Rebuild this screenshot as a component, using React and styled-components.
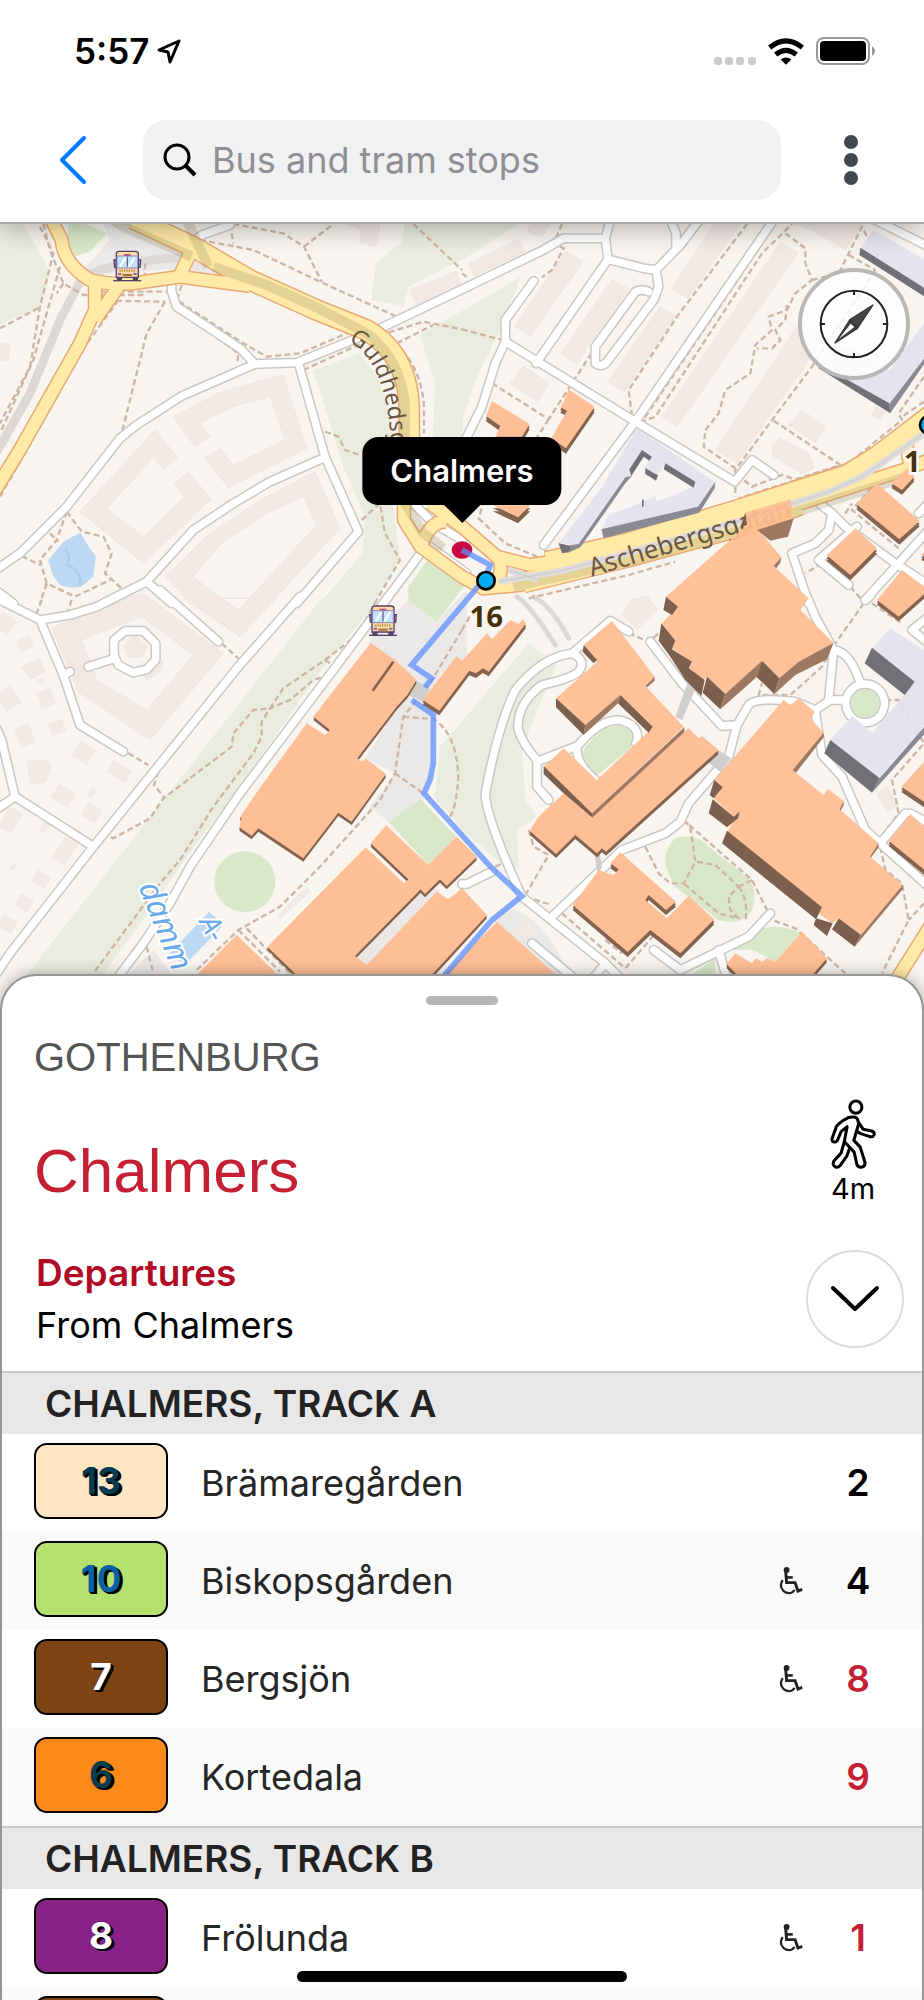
import React, { useState } from 'react';
import styled, { createGlobalStyle } from 'styled-components';

const GlobalStyle = createGlobalStyle`
  * {
    box-sizing: border-box;
  }
  body {
    margin: 0;
    background: #fff;
    color: #000;
    font-family: Inter, 'Liberation Sans', sans-serif;
  }
  button {
    padding: 0;
    border: none;
    background: none;
    cursor: pointer;
  }
`;

const tracks = [
  {
    name: 'CHALMERS, TRACK A',
    departures: [
      { line: '13', bg: '#fee6c3', color: '#043b54', to: 'Brämaregården', min: 2 },
      { line: '10', bg: '#b5e26f', color: '#0a62a4', to: 'Biskopsgården', min: 4, wheelchair: true },
      { line: '7', bg: '#7d4313', color: '#fff', to: 'Bergsjön', min: 8, wheelchair: true, live: true },
      { line: '6', bg: '#fb8a1b', color: '#0b3c4e', to: 'Kortedala', min: 9, live: true },
    ],
  },
  {
    name: 'CHALMERS, TRACK B',
    departures: [
      { line: '8', bg: '#872185', color: '#fff', to: 'Frölunda', min: 1, wheelchair: true, live: true },
      { line: '', bg: '#7d4313', color: '#fff', to: '', min: '' },
    ],
  },
];

// The map is cut in four tiles, every path is in the units of its own tile
const tiles = [
  {
    x: 0,
    y: 0,
    grass: [
      'M0 0H60L110 80L150 160L120 262L0 312Z',
      'M1215 0H1575L1390 118L1225 200L1210 258L1114 240L1128 128L1205 66Z',
      'M1386 272L1561 172L1500 330L1430 470L1390 590L1386 660H1298L1305 490L1260 345Z',
      'M940 450L1080 400L1130 470L1160 540L1180 650V860L1200 1020L1120 1150H960L1088 1000L1095 890L1030 740Z',
    ],
    lawn: [
      'M205 12H260L320 40L270 95L220 110L200 70Z',
      'M1290 1010L1400 1090L1310 1205L1225 1140V1100Z',
    ],
    plaza: ['M310 12H400L640 130L750 182L650 160L500 148L300 165L250 150L330 60Z'],
    water: ['M240 938L270 985L287 1010L280 1070L250 1095Q220 1112 180 1095L158 1065L145 1020L190 965Z'],
    flat: [
      'M520 590L670 512L850 465L920 685L685 803L615 715L660 685L700 735L855 660L810 530L700 560L600 608L630 648L585 680Z',
      'M465 630L533 712L490 750L462 712L320 865L430 950L555 830L522 790L565 755L633 838L430 1030L240 875Z',
      'M497 1070L630 940L780 840L945 755L1020 925L720 1250L570 1150ZM578 1070L715 1170L950 915L910 830L800 880L670 965Z',
      'M0 370H30L25 422H0Z',
      'M1228 210L1370 153L1386 200L1250 252Z',
      'M1045 12H1140L1130 78L1080 70V30Z',
    ],
    tram: ['M-20 715L90 520L180 300L240 185Q300 125 560 112'],
    paths: [
      'M130 12L150 90L190 190L250 225H440',
      'M120 20L160 100L120 260L90 440L0 610',
      'M180 140L100 420L0 640',
      'M190 190L170 220',
      'M0 325L120 262',
      'M300 215H500M320 242L495 245M435 130V215',
      'M495 245L440 340L365 640',
      'M355 240L240 400L80 690L0 830',
      'M545 195L530 240L730 370L800 410L900 400L1110 310',
      'M540 270L715 400L712 430',
      'M600 60L760 90L960 185L1190 290M690 12L700 70',
      'M700 12L850 40L912 80L965 185M912 80L1000 12M1240 12L1386 150',
      'M1120 320Q1262 400 1272 560V640',
      'M910 450L1140 345L1270 305L1386 328M1190 370L1300 315',
      'M975 635L1015 650L1035 690L1080 705',
      'M1085 900L1140 850L1155 940L1200 1020L1130 1140',
      'M200 875L245 935L310 950L335 1000L315 1060L370 1110',
      'M200 875L170 960L120 1020L140 1090L225 1130L330 1080',
      'M65 1008L120 1035M150 940L175 965M140 1090L120 1150',
    ],
    roads: [
      'M515 190V215L530 260L720 385L765 432L545 528L410 615L360 655L200 860L60 1000L-20 1055',
      'M765 432L890 428L1120 335L1386 208L1630 90L1690 55H1816',
      'M895 428L975 710L1075 935L890 1150',
      'M975 712L810 785L700 850L580 930L440 1085L310 1150',
      'M440 1085L515 1150',
      'M-20 1105L40 1150',
      'M580 65L605 45L690 15V0',
      'M1262 1000L1150 1150',
      'M1240 850L1300 910L1386 960M1290 980L1400 1060',
    ],
    yellow: [
      'M155 0L185 60Q190 130 270 180Q330 195 400 190L540 170L750 198',
      'M1228 700L1212 800V900L1262 980L1386 1070L1450 1105L1560 1095L1640 1072',
      'M285 180V270L240 370L65 680L-20 820',
      'M355 200L285 300',
      'M540 165L575 90',
      'M1290 850L1386 920L1490 1010L1590 1035L1690 1020',
      'M1262 980Q1290 900 1340 905',
      'M1500 1020Q1510 1070 1480 1090',
    ],
    avenue: [
      'M400 -4L575 78L750 180L950 270L1100 330C1200 390 1228 480 1228 580V720',
      'M1570 1088L1886 1010L2236 915L2400 855',
      'M1640 1025L1886 968L2186 878L2540 765L2630 710L2800 580',
    ],
    shade: [
      'M640 140L800 195L950 262L1100 340Q1205 420 1215 560V660L1215 850L1270 940L1330 985',
      'M1540 1100L1886 1024L2236 928L2400 872L2720 770',
      'M560 0L625 140',
      'M340 0L370 20L575 110',
    ],
  },
  {
    x: 1386,
    y: 0,
    flat: [
      'M20 130L170 58L190 95L35 168Z',
      'M312 93L363 125L205 350L158 318Z',
      'M450 178L500 206L345 432L297 402Z',
      'M595 260L641 288L487 515L437 485Z',
      'M755 12H835L677 235L630 205Z',
      'M955 68L1008 98L645 620L600 590Z',
      'M1010 310L1090 350L825 728L760 690Z',
      'M185 438L262 490L225 545L145 490Z',
      'M1020 570L1090 620L1060 668L980 615Z',
      'M955 655L1040 700L1057 745L1020 762L935 710L930 675Z',
      'M1000 12H1200L1150 90L1060 35Z',
      'M205 12H260L240 52L198 35Z',
      'M1240 560L1270 575L1255 600L1230 585Z',
    ],
    paths: [
      'M300 12L275 70L305 85L270 150L240 172M0 160L20 175',
      'M0 328L120 360',
      'M855 12L645 290L500 510L512 605',
      'M935 20L540 605L580 590L900 100L990 12',
      'M90 490L260 598L385 405M260 598L200 690L60 860L50 900',
      'M50 895L130 970L250 1020V980',
      'M970 40L1030 85V130L1050 180L1000 220L975 270L920 290L930 330L880 375L865 460L790 510L770 580L730 630L725 680L820 745',
      'M975 255L970 300L940 330L955 360L930 385H885',
      'M1050 180L1130 160L1200 20L1220 60M1160 105L1240 150',
      'M1240 150L1050 440L930 600L820 750V830',
      'M935 602L1135 735L1000 778L960 765L870 800L845 780',
      'M1386 470L1310 580L1320 600L1160 730L830 835M1386 545L1320 590',
      'M1310 985L1170 870L1240 790M1150 880L1170 850',
      'M1080 1030L1030 1060M1165 1100L1200 1140',
      'M200 1135L500 1065L640 1025',
    ],
    roads: [
      'M445 0L430 55L438 118L222 430',
      'M438 118L545 145L582 150L655 75L712 0',
      'M642 80V40L625 0',
      'M582 150L590 200L575 240L435 425Q420 445 400 430V380L520 215Q540 205 560 215',
      'M935 0L520 605L245 975',
      'M130 365L520 605L818 785L870 720L935 765',
      'M215 183L130 300V365L100 430L60 560L10 660',
      'M1240 0L1400 80',
      'M1065 845L1110 880L1150 920L1300 1030L1400 1095',
      'M1110 880L1100 930L1060 970L990 1000L1040 1150',
      'M1185 920L1070 1020L1160 1095',
      'M1400 930L1210 1140',
      'M1400 850L1370 880',
    ],
    yellow: ['M1000 855L1340 745L1400 720', 'M1330 660L1345 740'],
    rail: ['M110 1085L300 1052L500 998L850 898L1100 815L1200 770L1330 680L1400 630', 'M140 1050L230 1080'],
  },
  {
    x: 0,
    y: 1140,
    grass: [
      'M965 -5H1135L1110 30L960 215L720 560L560 770L430 960L290 1150H60L690 345Z',
      'M1400 375L1320 440L1312 560L1300 590L1400 700Z',
    ],
    lawn: [
      'M1165 665L1262 598L1370 712L1285 795Z',
      'M735 754A92 91 0 1 1 734 754Z',
    ],
    plaza: [
      'M1105 130L1240 -20L1310 65L1400 -30V190L1300 290V500L1270 600L1170 670L1110 620L1185 520L1097 475L1190 320L1250 240Z',
      'M1065 1070L1260 870L1320 870L1100 1100Z',
      'M380 1130L460 1050L520 1130Z',
    ],
    water: ['M627 935L670 975L560 1090L500 1070Z'],
    flat: [
      'M155 85L340 5L430 -20L670 160L450 420L235 275ZM245 120L290 240L440 330L580 165L425 50Z',
      'M575 -5H830L720 110ZM650 -5L720 35L755 -5Z',
      'M370 140L405 105L440 140L425 172H385Z',
      'M430 230L450 195L490 180L480 215L440 240Z',
      'M833 945L920 862L930 875L840 955Z',
      'M80 485L125 478L150 490V515L135 545L95 553Z',
      'M64 200L120 176L133 215L95 238Z',
    ],
    houses: [
      [75, 132, 46, 38, -25],
      [15, 70, 52, 50, 35],
      [25, 295, 56, 62, -32],
      [138, 295, 46, 52, -18],
      [75, 406, 46, 62, -20],
      [171, 382, 46, 40, -22],
      [252, 458, 54, 54, 32],
      [358, 515, 66, 42, 30],
      [190, 587, 60, 50, 32],
      [275, 638, 48, 48, 30],
      [275, 577, 18, 30, 32],
      [195, 753, 46, 78, 33],
      [32, 660, 46, 70, 30],
      [134, 682, 20, 34, 30],
      [124, 838, 46, 42, 30],
      [72, 908, 46, 42, 30],
      [22, 972, 50, 42, 30],
      [40, 800, 14, 22, 30],
      [122, 243, 24, 14, -20],
    ],
    paths: [
      'M125 0L110 40M215 0L205 30',
      'M665 130L715 175M385 460L445 495',
      'M1130 0L1080 90L1040 130L975 180L850 265L810 325L760 330L700 400L695 440L490 595L450 655L340 715L320 705',
      'M990 225L940 240L870 300L810 325L785 365V410L760 460L640 620L540 780L480 850L280 1120',
      'M975 180L990 190M475 515L462 555L495 595',
      'M1386 90L1290 250L1210 350L1185 520L1140 600L960 800L840 920L715 990L590 1110',
      'M1185 520L1270 580M1210 350L1300 357Q1370 400 1375 530Q1370 620 1350 650',
      'M715 990L840 1115M740 985L870 1120M440 1040L460 1120',
    ],
    roads: [
      'M900 -10L715 200L280 740L30 1060L-30 1150',
      'M1165 -10L1000 210L720 580L570 800L510 910L430 1030L340 1150',
      'M-20 -10L120 60L190 225L240 375L370 455',
      'M120 60L210 45L290 20L370 -20',
      'M480 -30L655 125',
      'M-20 365L5 420L45 590L280 740',
      'M45 590L-20 635',
      'M210 215L190 225',
      'M265 200L345 175',
      'M375 93L430 93L467 130V180L440 208L400 218L355 195L342 165V120Z',
      'M1386 852H1400L1476 815',
    ],
  },
  {
    x: 1386,
    y: 1140,
    grass: ['M-66 440L200 130L285 195L180 440L190 600L225 650L165 690L170 800H130L0 690L-80 580Z'],
    lawn: [
      'M360 460Q370 430 430 385Q470 370 505 385Q525 420 500 450L405 525Q370 500 360 460Z',
      'M1210 268A42 42 0 1 1 1209 268Z',
      'M640 715Q700 695 740 740L860 835Q890 880 870 930Q840 980 770 960L640 860Q580 770 640 715Z',
      'M795 1050L900 985Q960 970 1015 1000L940 1085L870 1050Z',
      'M680 1130L760 1075V1130Z',
    ],
    plaza: ['M90 960L130 920Q180 935 200 950Q280 1010 320 1130H200Z'],
    flat: [
      'M510 0L555 -12L588 30L525 88L480 42Z',
      'M1275 560L1310 615L1275 637L1245 582Z',
      'M195 965L218 985L190 1020L165 1000Z',
    ],
    siding: ['M165 -10Q200 10 280 135', 'M215 -10Q270 20 320 115'],
    paths: [
      'M500 100L560 125L590 100M0 90L40 20',
      'M550 740L590 820L625 850H665L700 785L685 680L670 665L870 840L930 960L1000 985L1150 1120',
      'M705 785L760 795L830 860L800 890L805 930L830 955L770 940L665 850',
      'M830 860Q860 900 850 965M870 840L830 860',
      'M190 885L260 765L215 740L200 690M190 890L260 912',
      'M300 940L490 1105L580 1000M430 1020L480 1060',
      'M1205 10L1120 130L1080 200L985 285H890L900 250M1230 10L1320 70',
      'M1270 300H1310L1386 430L1290 540L1310 640L1250 720L1270 810L1320 850L1340 960L1260 1120M1386 910L1340 960',
      'M100 800L130 785',
    ],
    roads: [
      'M500 95L445 62L330 160Q240 170 160 270Q110 370 70 580Q70 650 180 890L430 1090L490 1150',
      'M330 160Q375 180 350 215Q330 235 240 255Q165 310 168 385Q180 430 225 480V560L260 600',
      'M225 485L340 440',
      'M400 540Q340 490 345 440Q420 350 480 362Q540 380 522 430',
      'M565 125L660 250L780 378L825 375L860 315Q880 290 1000 305L1060 330L1105 300H1150',
      'M825 375L800 470L680 610L655 665L610 700L480 750L275 945',
      'M1035 -10L1060 50L1115 150L1100 300',
      'M1115 150Q1165 155 1195 250',
      'M1210 252A58 58 0 1 1 1209 252Z',
      'M1060 335L1080 465L1140 530L1210 690L1400 860',
      'M1255 730L1330 640M1345 640L1400 670',
      'M430 1090L390 1140',
      'M575 1050L655 1110L860 1010L925 940',
      'M770 1050L790 1120',
      'M210 1030L330 1130',
      'M1400 50L1350 90L1400 130',
      'M1210 0L1225 -12',
    ],
    yellow: ['M1410 970L1300 1145'],
  },
];

// Low buildings: roof outline and wall depth
const lowBuildings = [
  { x: 1386, y: 0, depth: 16, d: 'M90 543L203 612L180 650H100L115 618L72 588Z' },
  { x: 1386, y: 0, depth: 16, d: 'M320 508L398 560L312 685L268 655L315 572L295 562L305 545Z' },
  { x: 1386, y: 0, depth: 18, d: 'M92 856H205L168 892Z' },
  { x: 1386, y: 0, depth: 16, d: 'M1245 790L1373 903L1312 958L1183 852Z' },
  { x: 1386, y: 0, depth: 14, d: 'M1335 745L1357 770L1320 810L1288 790Z' },
  { x: 1386, y: 0, depth: 16, d: 'M1180 925L1245 985L1165 1065L1094 1006Z' },
  { x: 1386, y: 0, depth: 14, d: 'M1320 1050L1400 1110L1310 1190L1245 1140Z' },
  { x: 1386, y: 0, depth: 14, d: 'M1400 985L1378 1005L1400 1020Z' },
  {
    x: 0,
    y: 1140,
    depth: 10,
    d: 'M1112 128L1188 182L1250 240L1222 285L1190 320L1072 475L1085 485L1097 475L1158 522L1055 665L1015 638L910 775L775 685L755 708L718 682L725 655L720 650L782 560L920 370L975 405L990 390L940 350Z',
  },
  {
    x: 0,
    y: 1140,
    depth: 10,
    d: 'M1097 742L1212 850L1225 838L1112 730L1158 676L1285 795L1370 710L1431 770L1340 858L1320 838L1275 882L1262 868L1065 1068L1100 1095L1310 875L1345 898L1386 865L1461 945L1300 1120L1250 1150H915L802 1040Z',
  },
  { x: 0, y: 1140, depth: 8, d: 'M710 1005L860 1150H565Z' },
  {
    x: 1386,
    y: 1140,
    depth: 14,
    d: 'M-16 168L0 183L75 100L90 118L145 60L170 72L182 58L192 70L80 215L62 205L42 220L22 212L-68 332L-118 300Z',
  },
  {
    x: 1386,
    y: 1140,
    depth: 12,
    d: 'M680 385L710 415L720 408L770 450L432 755L420 745L405 760L340 705L282 762L203 692L230 650L310 575L390 650L665 395Z',
  },
  {
    x: 1386,
    y: 1140,
    depth: 15,
    d: 'M475 757L642 905L612 930L560 885L550 900L615 955L680 888L757 958L655 1060L565 990L497 1056L332 915L410 810L455 825L470 808L445 790Z',
  },
  { x: 1386, y: 1140, depth: 12, d: 'M105 965L310 1150H-80L20 1050Z' },
  { x: 1386, y: 1140, depth: 16, d: 'M1400 470L1318 560L1400 615Z' },
  { x: 1386, y: 1140, depth: 16, d: 'M1345 642L1400 690V820L1280 722Z' },
  {
    x: 1386,
    y: 1140,
    depth: 12,
    d: 'M1020 995L1095 1075L1030 1150H850L793 1092L820 1060L870 1090L882 1074L900 1085L915 1074L940 1085Z',
  },
];

// Tall buildings have their wall faces drawn one by one
const tallBuildings = [
  {
    x: 1386,
    y: 1140,
    roof: [
      'M985 -302L850 -262L855 -225L612 -10L645 20L600 70L640 125L632 145L690 190L680 205L725 240L735 230L790 282L900 182L952 235L1010 185L1115 128L1015 30L1040 -5L935 -102L958 -128L890 -210L995 -240Z',
      'M450 62L578 230L550 258L665 380L390 640L245 500L305 445L405 540L570 385L475 285L370 375L282 295L405 185L365 135Z',
      'M965 300L985 315L1010 295L1058 335L1048 358L1085 398L998 515L1085 585L1098 567L1145 603L1133 628L1250 730L1225 770L1322 855L1197 1005L1130 955L1110 970L1070 940L1080 922L795 695L830 640L815 650L755 595L780 560L757 540Z',
    ],
    dark: [
      'M612 -10L648 20L630 45L604 30Z',
      'M598 70L640 122L630 148L690 185L680 205L728 240L718 288L670 240L625 170L590 122Z',
      'M735 230L790 282L775 328L722 278Z',
      'M900 182L952 235L937 282L883 230Z',
      'M850 -262L855 -225L835 -218Z',
      'M282 295L370 375L365 405L282 322Z',
      'M475 285L572 380L560 398L468 310Z',
      'M245 498L390 640V652L300 575L245 522Z',
      'M365 135L405 180L395 190L362 155Z',
      'M757 540L782 562L755 595L743 585Z',
      'M752 598L815 650L833 635L828 655L795 682L740 640Z',
      'M795 692L1080 922L1062 958L780 730Z',
      'M1062 955L1112 970L1095 1008L1055 975Z',
      'M1130 955L1197 1005L1178 1040L1110 988Z',
    ],
    mid: [
      'M885 -210L995 -245L978 -190L925 -178Z',
      'M935 -102L958 -128L955 -112L943 -95Z',
      'M790 282L900 182L885 230L775 328Z',
      'M952 235L1010 185L1115 128L1095 178L1000 225L937 282Z',
      'M370 375L475 285L468 310L365 405Z',
      'M390 640L667 382V396L390 654Z',
      'M550 258L578 230V242L556 262Z',
      'M1197 1005L1322 855V868L1178 1040Z',
      'M1085 398V412L1002 518L992 510Z',
      'M1133 628L1145 603V615L1136 632Z',
      'M1225 768L1250 730V742L1226 774Z',
    ],
  },
];

const lilacBuildings = [
  {
    x: 1386,
    y: 0,
    roof: [
      'M1233 30L1400 125V215L1195 85Z',
      'M1400 290L1282 452L1200 400L1120 370L1070 430L1282 552L1400 400Z',
      'M525 625L760 787L708 862L418 930L440 885L545 845L580 828L585 845L697 800L610 730L585 768L548 745L570 708L540 690L505 745L510 768L490 780L350 975L290 970L420 800Z',
    ],
    dark: [
      'M1195 83L1400 212V238L1192 105Z',
      'M1068 430L1282 550L1285 580L1070 445Z',
      'M610 730L700 785L695 803L605 748Z',
      'M550 745L588 766L582 782L550 762Z',
      'M540 690L570 710L562 722L545 710L508 768L502 748Z',
      'M290 970L327 978L322 997L300 1000Z',
      'M540 840L545 838V858L540 862Z',
    ],
    mid: [
      'M1285 580L1282 552L1400 398V412Z',
      'M418 928L708 860L760 785L758 805L712 878L425 955Z',
      'M350 972L490 772L510 768L490 790L355 982L322 997L327 976Z',
    ],
  },
  {
    x: 1386,
    y: 1140,
    roof: ['M1285 85L1400 160V385L1253 535L1105 420L1170 348L1232 398L1358 245L1230 145Z'],
    dark: ['M1230 143L1358 245L1328 285L1208 190Z', 'M1105 420L1253 535L1230 578L1087 460Z'],
    mid: ['M1253 535L1400 366V388L1230 578Z'],
  },
];

const bridges = [
  'M2066 1378L2091 1395L2046 1500L2026 1490Z',
  'M2121 1625L2156 1590L2194 1615L2161 1655Z',
  'M1783 1895L1798 1895L1806 1940L1793 1968Z',
  'M1245 1380L1290 1405L1270 1445L1225 1425Z',
];

const Layer = ({ name, ...props }) =>
  tiles.map((tile, i) => (
    <g key={i} transform={`translate(${tile.x} ${tile.y})`} {...props}>
      {(tile[name] || []).map((d) => (
        <path key={d} d={d} />
      ))}
    </g>
  ));

const Block = ({ block, roof, dark, mid }) => (
  <g transform={`translate(${block.x} ${block.y})`}>
    <path d={block.roof.join('')} fill={roof} opacity="0.93" />
    <path d={block.dark.join('')} fill={dark} />
    <path d={block.mid.join('')} fill={mid} />
  </g>
);

const Bus = ({ x, y }) => (
  <g transform={`translate(${x} ${y})`} stroke="#54406b" strokeWidth="4">
    <path d="M-42 44H42" />
    <path d="M-30 32H-18V42H-30ZM18 32H30V42H18Z" fill="#54406b" />
    <path d="M-40 -18H-33V4H-38ZM40 -18H33V4H38Z" fill="#b7a3d6" />
    <path d="M-33 -36Q-33 -44 -24 -44H24Q33 -44 33 -36V34H-33Z" fill="#fbdca4" />
    <path d="M-31 -30H31V6H-31Z" fill="#c3e2fb" stroke="#8f86b5" strokeWidth="3" />
    <path d="M-22 2L-4 -26M4 2L22 -26" stroke="#fff" strokeWidth="6" />
    <path d="M0 -28V2" stroke="#54406b" strokeWidth="3" />
    <path d="M-10 -33H10" stroke="#b45a8a" strokeWidth="6" />
    <path d="M-24 14H24" stroke="#c98a58" strokeWidth="7" strokeDasharray="4 3" />
    <path d="M-28 24H-18M18 24H28" stroke="#8b63a8" strokeWidth="6" />
    <path d="M-14 27H14" stroke="#a8683c" strokeWidth="6" />
  </g>
);

const Map = () => (
  <MapSvg viewBox="0 12 2772 2370" aria-label="Map of the area around Chalmers">
    <defs>
      <path id="guldhedsgatan" d="M1044 362C1100 392 1172 470 1174 720" />
      <path id="aschebergsgatan" d="M1775 1070L2410 880" />
      <path id="dammen" d="M415 2000L575 2400" />
      <path id="adammen" d="M596 2106L676 2256" />
    </defs>
    <rect width="2772" height="2400" fill="#f8f5f0" />
    <Layer name="grass" fill="#e8eddf" />
    <Layer name="plaza" fill="#ebe9e8" />
    <Layer name="lawn" fill="#dae8c9" />
    <Layer name="water" fill="#bdd8f2" />
    <Layer name="flat" fill="#f2e9e4" fillRule="evenodd" stroke="#eee2dc" strokeWidth="2" />
    <g transform="translate(0 1140)" fill="#f2e9e4">
      {tiles[2].houses.map(([x, y, w, h, turn]) => (
        <rect
          key={`${x}-${y}`}
          x={x - w / 2}
          y={y - h / 2}
          width={w}
          height={h}
          transform={`rotate(${turn} ${x} ${y})`}
        />
      ))}
    </g>
    <path d="M195 985Q215 1010 200 1035Q245 1050 240 1100" fill="none" stroke="#afcbe6" strokeWidth="8" />
    <g fill="none" strokeLinejoin="round">
      <Layer name="tram" stroke="#dcd9d6" strokeWidth="26" strokeLinecap="round" />
      <Layer name="siding" stroke="#dcd9d6" strokeWidth="15" strokeLinecap="round" />
      <Layer name="paths" stroke="#cdb6a5" strokeWidth="7" strokeDasharray="18 10" />
      <Layer name="roads" stroke="#cac8c6" strokeWidth="31" strokeLinecap="round" />
      <Layer name="roads" stroke="#fff" strokeWidth="22" strokeLinecap="round" />
      <Layer name="avenue" stroke="#e9a873" strokeWidth="66" />
      <Layer name="yellow" stroke="#e9a873" strokeWidth="44" />
      <Layer name="avenue" stroke="#ffeba7" strokeWidth="57" />
      <Layer name="yellow" stroke="#ffeba7" strokeWidth="35" />
      <Layer name="shade" stroke="#8f8656" strokeWidth="30" opacity="0.24" />
      <Layer name="rail" stroke="#dedddb" strokeWidth="20" />
      <Layer name="rail" stroke="#cac8c6" strokeWidth="3" />
    </g>
    <Street $size={70}>
      <textPath href="#guldhedsgatan">Guldhedsg</textPath>
    </Street>
    <Street $size={77}>
      <textPath href="#aschebergsgatan">Aschebergsgatan</textPath>
    </Street>
    <path d={bridges.join('')} fill="#d0cecc" />
    {lowBuildings.map(({ x, y, d, depth }) => (
      <g key={d} transform={`translate(${x} ${y})`}>
        <path d={d} fill="#84634f" transform={`translate(0 ${depth})`} />
        <path d={d} fill="#84634f" transform={`translate(0 ${depth / 2})`} />
        <path d={d} fill="#ffbf96" />
      </g>
    ))}
    {tallBuildings.map((block, i) => (
      <Block key={i} block={block} roof="#ffbc90" dark="#7d5f4d" mid="#9f7861" />
    ))}
    {lilacBuildings.map((block, i) => (
      <Block key={i} block={block} roof="#e2e2ef" dark="#707076" mid="#8a8a94" />
    ))}
    <path d="M1118 1412L1180 1325" stroke="#84634f" strokeWidth="8" />
    <WaterName $size={96}>
      <textPath href="#dammen">damm</textPath>
    </WaterName>
    <WaterName $size={84}>
      <textPath href="#adammen">A-</textPath>
    </WaterName>
    <Bus x={382} y={138} />
    <Bus x={1149} y={1202} />
    <ellipse cx="1386" cy="990" rx="31" ry="26" fill="#c90740" />
    <path
      d="M1386 990L1471 1035L1455 1075L1235 1335L1295 1375L1275 1402M1235 1440L1300 1485V1630L1290 1680L1272 1720L1476 1945L1566 2028L1476 2100L1330 2270"
      fill="none"
      stroke="#5f8fff"
      strokeOpacity="0.75"
      strokeWidth="17"
    />
    <g fill="#00aeef" stroke="#000" strokeWidth="8">
      <circle cx="1458" cy="1082" r="26" />
      <circle cx="2786" cy="615" r="26" />
    </g>
    <StopNumber x="1459" y="1222" textAnchor="middle">
      16
    </StopNumber>
    <StopNumber x="2712" y="756">
      1
    </StopNumber>
  </MapSvg>
);

const Walker = () => (
  <svg width="46" height="70" viewBox="213 25 137 208" aria-hidden="true">
    <g fill="none" stroke="#000" strokeWidth="9" strokeLinejoin="round" strokeLinecap="round">
      <circle cx="290" cy="49" r="18" />
      <path d="M268 80Q250 88 240 98L232 107L219 143Q218 153 227 153Q234 153 236 146L246 122L264 107L256 150L246 186L224 210Q219 224 231 228Q238 229 243 223L263 195L271 172" />
      <path d="M256 152L285 183L293 219Q296 229 307 228Q319 226 317 213L303 168L284 148L298 100Q297 82 288 79Q278 78 268 80" />
      <path d="M299 96L312 115L337 120Q347 124 344 132Q341 139 332 137L304 128L295 122" />
    </g>
  </svg>
);

const Wheelchair = () => (
  <svg width="24" height="28" viewBox="56 77 71 86" role="img" aria-label="Wheelchair accessible">
    <circle cx="78" cy="86" r="9" fill="#222" />
    <g fill="none" stroke="#222" strokeWidth="8">
      <path d="M75 88L78 125H104L113 151L126 146" strokeWidth="9" />
      <path d="M78 109H97" />
      <path d="M66 117Q54 135 68 150Q80 160 93 156Q101 152 102 147" strokeWidth="7" />
    </g>
  </svg>
);

const App = () => {
  const [search, setSearch] = useState('');

  return (
    <Phone>
      <GlobalStyle />
      <Header>
        <StatusBar>
          <div className="time">
            5:57
            <svg width="24" height="25" viewBox="0 0 24 25">
              <path
                d="M22 2L2 11L11 13L13 23Z"
                fill="none"
                stroke="#000"
                strokeWidth="3"
                strokeLinejoin="round"
              />
            </svg>
          </div>
          <div className="signals">
            <svg width="42" height="8" viewBox="0 0 42 8" fill="#cbcbcb">
              <rect width="8" height="8" rx="3" />
              <rect x="11" width="8" height="8" rx="3" />
              <rect x="22" width="8" height="8" rx="3" />
              <rect x="34" width="8" height="8" rx="3" />
            </svg>
            <svg width="36" height="27" viewBox="0 0 108 80">
              <path d="M54 80L38 64Q54 52 70 64Z" />
              <g fill="none" stroke="#000" strokeWidth="15">
                <path d="M23 49Q54 24 85 49" />
                <path d="M5 28Q54 -12 103 28" />
              </g>
            </svg>
            <svg width="60" height="28" viewBox="0 0 60 28">
              <rect x="1" y="1" width="52" height="26" rx="7" fill="none" stroke="#999" strokeWidth="2" />
              <rect x="4" y="4" width="46" height="20" rx="4" />
              <path d="M56 9Q62 14 56 19Z" fill="#999" />
            </svg>
          </div>
        </StatusBar>
        <SearchBar>
          <button type="button" aria-label="Back">
            <svg width="28" height="50" viewBox="0 0 28 50">
              <path
                d="M25 3L3 25L25 47"
                fill="none"
                stroke="#007aff"
                strokeWidth="4"
                strokeLinecap="round"
                strokeLinejoin="round"
              />
            </svg>
          </button>
          <SearchField>
            <svg width="34" height="34" viewBox="0 0 34 34" fill="none" stroke="#000">
              <circle cx="14" cy="14" r="12" strokeWidth="3" />
              <path d="M22 22L32 32" strokeWidth="4" />
            </svg>
            <input
              type="text"
              aria-label="Bus and tram stops"
              placeholder="Bus and tram stops"
              value={search}
              onChange={(e) => setSearch(e.target.value)}
            />
          </SearchField>
          <button type="button" aria-label="More">
            <svg width="14" height="50" viewBox="0 0 14 50" fill="#42464d">
              <circle cx="7" cy="7" r="7" />
              <circle cx="7" cy="25" r="7" />
              <circle cx="7" cy="43" r="7" />
            </svg>
          </button>
        </SearchBar>
      </Header>
      <MapArea>
        <Map />
        <CompassButton type="button" aria-label="Compass">
          <svg width="70" height="70" viewBox="0 0 210 210">
            <circle cx="105" cy="105" r="100" fill="none" stroke="#222" strokeWidth="6" />
            <path d="M105 5V18M105 192V205M5 105H18M192 105H205" stroke="#222" strokeWidth="6" />
            <path d="M162 48L93 92L115 118Z" fill="#444" stroke="#333" strokeWidth="4" strokeLinejoin="round" />
            <path
              d="M93 92L48 162L115 118Z"
              fill="#444"
              stroke="#333"
              strokeWidth="4"
              strokeLinejoin="round"
            />
            <path d="M60 149L95 104L106 114Z" fill="#fff" />
          </svg>
        </CompassButton>
        <Callout>Chalmers</Callout>
      </MapArea>
      <Sheet>
        <Handle />
        <City>GOTHENBURG</City>
        <StopRow>
          <h1>Chalmers</h1>
          <Walk>
            <Walker />
            4m
          </Walk>
        </StopRow>
        <DeparturesRow>
          <div>
            <h2>Departures</h2>
            <p>From Chalmers</p>
          </div>
          <button type="button" aria-label="Show departures">
            <svg width="50" height="28" viewBox="0 0 50 28">
              <path
                d="M3 3L25 24L47 3"
                fill="none"
                stroke="#000"
                strokeWidth="4"
                strokeLinecap="round"
                strokeLinejoin="round"
              />
            </svg>
          </button>
        </DeparturesRow>
        <Timetable>
          {tracks.map((track) => (
            <tbody key={track.name}>
              <tr>
                <TrackName colSpan={4} scope="rowgroup">
                  {track.name}
                </TrackName>
              </tr>
              {track.departures.map((dep) => (
                <Departure key={dep.line} $live={dep.live}>
                  <td className="line">
                    <LineBadge $bg={dep.bg} $color={dep.color}>
                      {dep.line}
                    </LineBadge>
                  </td>
                  <td className="to">{dep.to}</td>
                  <td className="access">{dep.wheelchair ? <Wheelchair /> : null}</td>
                  <td className="minutes">{dep.min}</td>
                </Departure>
              ))}
            </tbody>
          ))}
        </Timetable>
      </Sheet>
      <HomeIndicator />
    </Phone>
  );
};

export default App;

const Phone = styled.div`
  display: flex;
  flex-direction: column;
  position: relative;
  height: 100vh;
  overflow: hidden;
`;

const Header = styled.header`
  position: relative;
  z-index: 1;
  flex: none;
  background: #fff;
  border-bottom: 2px solid #a8a8a8;
  box-shadow: 0 4px 24px rgba(0, 0, 0, 0.3);
`;

const StatusBar = styled.div`
  display: flex;
  justify-content: space-between;
  align-items: center;
  padding: 30px 48px 30px 74px;
  .time {
    display: flex;
    align-items: center;
    gap: 8px;
    font-size: 35px;
    font-weight: 600;
    line-height: 42px;
  }
  .signals {
    display: flex;
    align-items: flex-end;
    gap: 12px;
  }
`;

const SearchBar = styled.div`
  display: flex;
  align-items: center;
  padding: 18px 66px 22px 59px;
  > button {
    display: flex;
    flex: none;
  }
`;

const SearchField = styled.label`
  display: flex;
  flex: 1;
  align-items: center;
  gap: 15px;
  min-width: 0;
  height: 80px;
  margin: 0 63px 0 56px;
  padding: 0 20px;
  border-radius: 24px;
  background: #f1f1f1;
  > svg {
    flex: none;
  }
  > input {
    flex: 1;
    min-width: 0;
    padding: 0;
    border: none;
    outline: none;
    background: none;
    font-family: inherit;
    font-size: 36px;
    line-height: 44px;
    &::placeholder {
      color: #8e8e93;
    }
  }
`;

const MapArea = styled.div`
  flex: none;
  position: relative;
`;

const MapSvg = styled.svg`
  display: block;
  width: 100%;
`;

const Street = styled.text`
  font-family: 'Noto Sans', sans-serif;
  font-size: ${(props) => props.$size}px;
  fill: #6b5643;
`;

const WaterName = styled.text`
  font-family: 'Noto Sans', sans-serif;
  font-size: ${(props) => props.$size}px;
  font-style: italic;
  fill: #6aa9ea;
  stroke: #fff;
  stroke-width: 12px;
  paint-order: stroke;
`;

const StopNumber = styled.text`
  font-family: 'Noto Sans', sans-serif;
  font-size: 88px;
  font-weight: 700;
  fill: #45300a;
  stroke: #faf7f2;
  stroke-width: 16px;
  paint-order: stroke;
`;

const CompassButton = styled.button`
  display: flex;
  position: absolute;
  top: 44px;
  right: 14px;
  justify-content: center;
  align-items: center;
  width: 112px;
  height: 112px;
  && {
    border: 4px solid #b9b8b7;
    border-radius: 50%;
    background: rgba(255, 255, 255, 0.8);
  }
`;

const Callout = styled.div`
  position: absolute;
  top: 27%;
  left: 50%;
  padding: 16px 28px;
  border-radius: 16px;
  background: #000;
  color: #fff;
  font-size: 31px;
  font-weight: 600;
  line-height: 36px;
  transform: translateX(-50%);
  &::after {
    content: '';
    position: absolute;
    top: 100%;
    left: 50%;
    border: 18px solid transparent;
    border-top-color: #000;
    border-bottom: none;
    transform: translateX(-50%);
  }
`;

const Sheet = styled.main`
  position: relative;
  flex: 1;
  min-height: 0;
  margin-top: -40px;
  overflow: hidden;
  border: 2px solid #959595;
  border-bottom: none;
  border-radius: 36px 36px 0 0;
  background: #fff;
  box-shadow: 0 0 16px rgba(0, 0, 0, 0.3);
`;

const Handle = styled.div`
  width: 72px;
  height: 9px;
  margin: 20px auto 0;
  border-radius: 5px;
  background: #b6b6b6;
`;

const City = styled.div`
  padding: 28px 32px 0;
  color: #555;
  font-family: 'Liberation Sans', sans-serif;
  font-size: 40px;
  line-height: 48px;
`;

const StopRow = styled.div`
  display: flex;
  justify-content: space-between;
  align-items: center;
  padding: 18px 46px 0 32px;
  > h1 {
    margin: 34px 0 0;
    color: #c41f33;
    font-family: 'Liberation Sans', sans-serif;
    font-size: 62px;
    font-weight: 400;
    line-height: 72px;
  }
`;

const Walk = styled.div`
  display: flex;
  flex-direction: column;
  align-items: center;
  font-size: 29px;
  line-height: 40px;
`;

const DeparturesRow = styled.div`
  display: flex;
  justify-content: space-between;
  align-items: center;
  padding: 38px 18px 20px 34px;
  h2 {
    margin: 0;
    color: #b10a26;
    font-size: 37px;
    font-weight: 600;
    line-height: 52px;
  }
  p {
    margin: 0;
    font-size: 36px;
    line-height: 52px;
  }
  > button {
    display: flex;
    justify-content: center;
    align-items: center;
    width: 98px;
    height: 98px;
    border: 2px solid #dcdcdc;
    border-radius: 50%;
  }
`;

const Timetable = styled.table`
  width: 100%;
  border-collapse: separate;
  border-spacing: 0;
`;

const TrackName = styled.th`
  height: 63px;
  padding: 0 0 0 43px;
  border-top: 2px solid #c9c9c9;
  background: #e8e8e8;
  color: #222;
  font-size: 37px;
  font-weight: 600;
  line-height: 44px;
  text-align: left;
`;

const Departure = styled.tr`
  height: 98px;
  background: #fff;
  &:nth-child(odd) {
    background: #f9f9f9;
  }
  > td {
    padding: 0;
    font-size: 36px;
    line-height: 44px;
  }
  > .line {
    width: 199px;
    padding-left: 32px;
  }
  > .to {
    color: #262626;
  }
  > .access {
    width: 54px;
    > svg {
      display: block;
    }
  }
  > .minutes {
    width: 89px;
    padding-right: 39px;
    color: ${(props) => (props.$live ? '#c41f33' : '#000')};
    font-size: 37px;
    font-weight: 600;
    text-align: center;
  }
`;

const LineBadge = styled.div`
  display: flex;
  justify-content: center;
  align-items: center;
  width: 134px;
  height: 76px;
  margin-bottom: 4px;
  border: 2px solid #000;
  border-radius: 13px;
  background: ${(props) => props.$bg};
  color: ${(props) => props.$color};
  font-size: 37px;
  font-weight: 700;
  text-shadow: 1px 1px #000, 2px 2px #000, 3px 2px #000;
`;

const HomeIndicator = styled.div`
  position: absolute;
  bottom: 18px;
  left: 50%;
  width: 330px;
  height: 11px;
  border-radius: 6px;
  background: #000;
  transform: translateX(-50%);
`;
